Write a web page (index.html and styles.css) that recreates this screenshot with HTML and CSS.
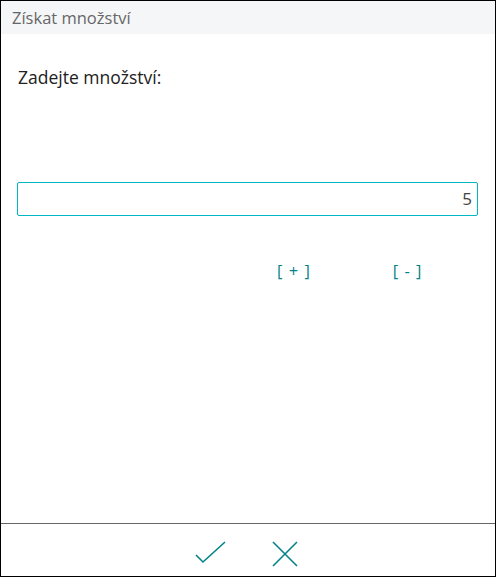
FILE: index.html
```html
<!DOCTYPE html>
<html lang="cs">
<head>
<meta charset="utf-8">
<link rel="stylesheet" href="styles.css">
</head>
<body>
<div class="dialog">
  <div class="header">Získat množství</div>
  <div class="content">
    <div class="label">Zadejte množství:</div>
    <div class="input">5</div>
    <div class="steps">
      <span class="step step-plus">[ + ]</span>
      <span class="step step-minus">[ - ]</span>
    </div>
  </div>
  <div class="footer">
    <svg class="icon" width="34" height="26" viewBox="0 0 34 26"><path d="M2 14 L9 21 L31 1" fill="none" stroke="#038387" stroke-width="1.6"/></svg>
    <svg class="icon" width="26" height="26" viewBox="0 0 26 26"><path d="M1 1 L25 25 M25 1 L1 25" fill="none" stroke="#038387" stroke-width="1.6"/></svg>
  </div>
</div>
</body>
</html>
```
FILE: styles.css
```css
html, body { margin: 0; padding: 0; background: #fff; }
body { font-family: "Segoe UI", "Open Sans", "Noto Sans", sans-serif; }
.dialog {
  width: 496px; height: 577px; box-sizing: border-box;
  border: 1px solid #000;
  display: flex; flex-direction: column;
}
.header {
  height: 33px; background: #f5f6f8; color: #666;
  font-size: 16.5px; line-height: 33px; padding-left: 11px;
}
.content { flex: 1; padding: 0 17px 0 16px; }
.label { margin-top: 31px; font-size: 17.5px; color: #212121; line-height: 24px; padding-left: 1px; }
.input {
  margin-top: 93px; height: 34px; box-sizing: border-box;
  border: 1px solid #00b7c3; border-radius: 2px;
  text-align: right; padding-right: 5px; font-size: 17px; line-height: 31px; color: #444;
}
.steps { display: flex; margin-top: 43px; padding-left: 260px; gap: 82px; }
.step { color: #038387; font-size: 16.5px; letter-spacing: 1px; }
.footer {
  height: 52px; border-top: 1px solid #666;
  display: flex; justify-content: center; align-items: center; gap: 44px;
  padding-right: 4px;
}
.icon { display: block; margin-top: 8px; }
```
